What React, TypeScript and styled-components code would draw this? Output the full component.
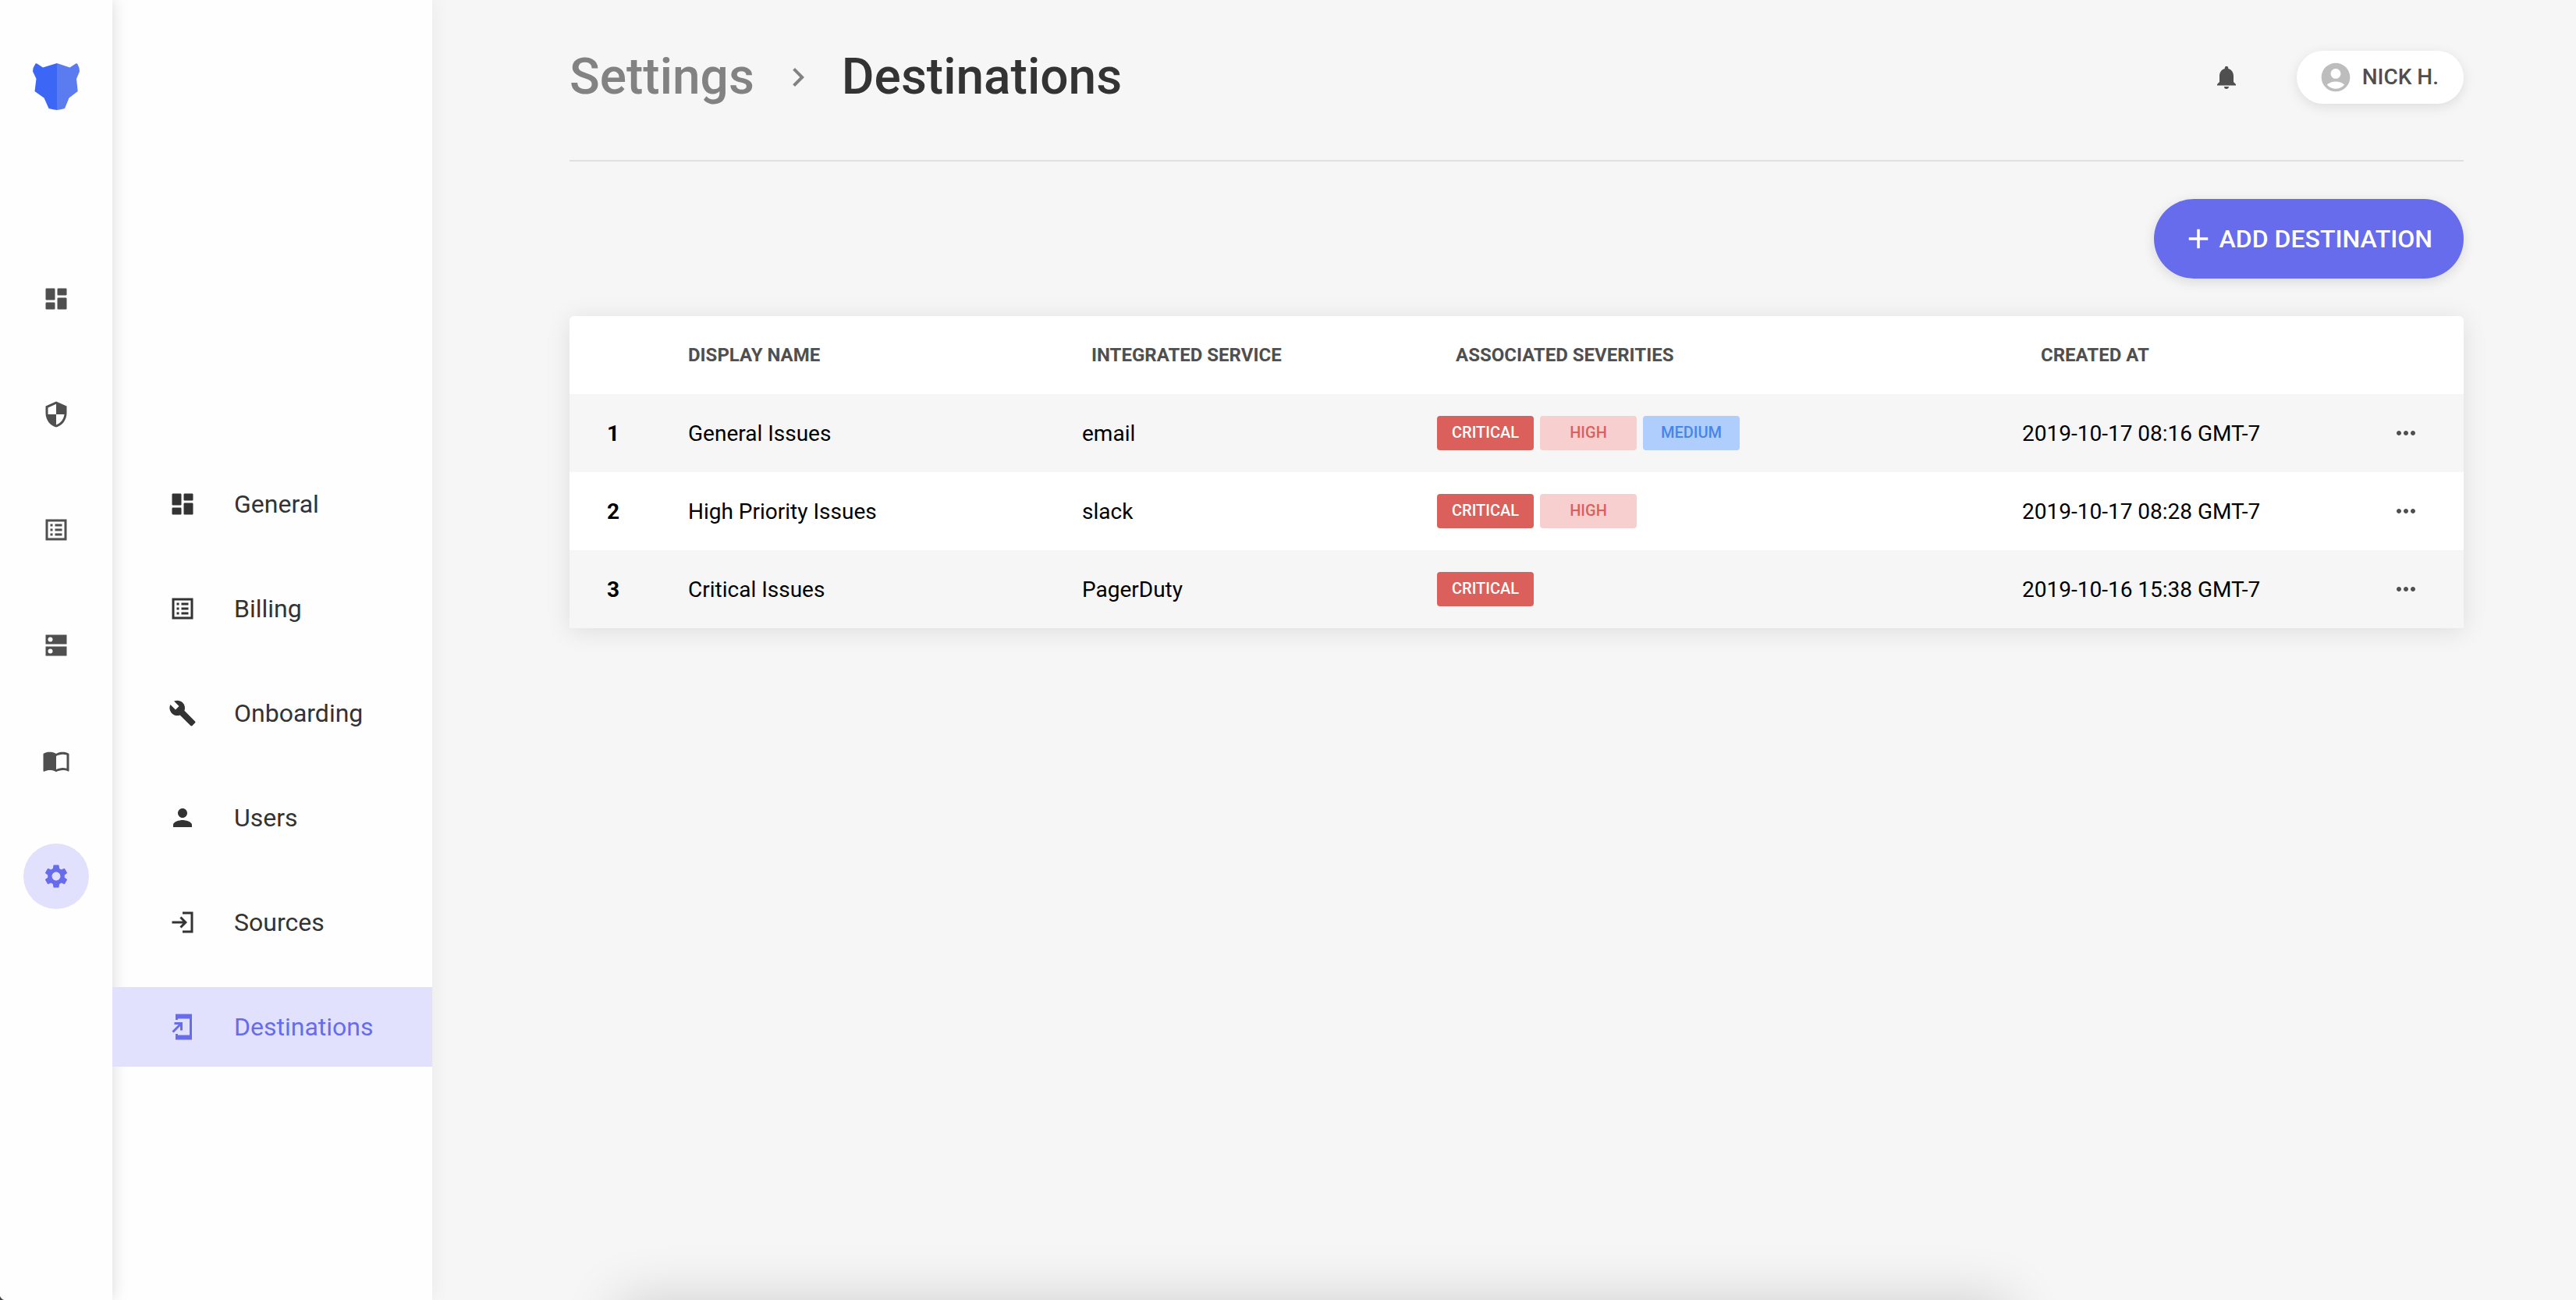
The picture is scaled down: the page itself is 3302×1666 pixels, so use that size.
import type { ReactNode } from "react";
import styled, { createGlobalStyle, css } from "styled-components";
import {
  MdAccountCircle,
  MdAdd,
  MdBuild,
  MdChevronRight,
  MdImportContacts,
  MdMoreHoriz,
  MdNotifications,
  MdPerson,
  MdSecurity,
  MdSettings,
} from "react-icons/md";

const color = {
  page: "#f6f6f6",
  surface: "#fefefe",
  ink: "#333333",
  muted: "#4f4f4f",
  faint: "#828282",
  accent: "#676cec",
  accentSoft: "#e1e1fd",
  line: "#e0e0e0",
};

const GlobalStyle = createGlobalStyle`
  *, *::before, *::after { box-sizing: border-box; }
  body {
    margin: 0;
    background: ${color.page};
    color: ${color.ink};
    font-family: Roboto, "Noto Sans", sans-serif;
  }
  a { color: inherit; text-decoration: none; }
  button { font: inherit; border: 0; cursor: pointer; }
  svg { display: block; flex: none; }
`;

/* ---------- layout ---------- */

const Shell = styled.div`
  display: flex;
  min-height: 100vh;
`;

const Rail = styled.nav`
  position: relative;
  z-index: 1;
  flex: none;
  display: flex;
  flex-direction: column;
  align-items: center;
  gap: 200px;
  width: 144px;
  padding-top: 81px;
  background: ${color.surface};
  box-shadow: 0 0 20px rgba(0, 0, 0, 0.15);
`;

const RailList = styled.ul`
  display: flex;
  flex-direction: column;
  gap: 64px;
  margin: 0;
  padding: 0;
  list-style: none;
`;

const RailLink = styled.a<{ $active?: boolean }>`
  display: flex;
  align-items: center;
  justify-content: center;
  width: 84px;
  height: 84px;
  border-radius: 50%;
  color: ${(p) => (p.$active ? color.accent : color.muted)};
  background: ${(p) => (p.$active ? color.accentSoft : "transparent")};
`;

const SubNav = styled.nav`
  flex: none;
  width: 410px;
  padding-top: 595px;
  background: ${color.surface};
  box-shadow: 0 0 24px rgba(0, 0, 0, 0.06);
`;

const SubNavList = styled.ul`
  display: flex;
  flex-direction: column;
  gap: 32px;
  margin: 0;
  padding: 0;
  list-style: none;
`;

const SubNavLink = styled.a<{ $active?: boolean }>`
  display: flex;
  align-items: center;
  gap: 48px;
  height: 102px;
  padding-left: 72px;
  font-size: 32px;
  line-height: 40px;
  ${(p) =>
    p.$active &&
    css`
      position: relative;
      z-index: 2;
      color: ${color.accent};
      background: ${color.accentSoft};
    `}
`;

const Main = styled.main`
  flex: 1;
  min-width: 0;
  display: flex;
  flex-direction: column;
  gap: 48px;
  padding: 0 144px 144px 176px;
`;

/* ---------- header ---------- */

const Header = styled.header`
  display: flex;
  align-items: center;
  justify-content: space-between;
  padding: 60px 0 67px;
  border-bottom: 2px solid ${color.line};
`;

const Breadcrumb = styled.div`
  display: flex;
  align-items: center;
  gap: 32px;
  font-size: 64px;
  font-weight: 500;
  line-height: 78px;
  color: ${color.faint};
`;

const Title = styled.h1`
  margin: 0;
  font: inherit;
  color: ${color.ink};
`;

const HeaderTools = styled.div`
  display: flex;
  align-items: center;
  gap: 72px;
`;

const IconButton = styled.button`
  display: flex;
  padding: 0;
  color: ${color.muted};
  background: none;
`;

const UserButton = styled.button`
  display: flex;
  align-items: center;
  gap: 12px;
  height: 68px;
  padding: 0 32px 0 28px;
  border-radius: 34px;
  background: #ffffff;
  color: ${color.muted};
  font-size: 28px;
  font-weight: 500;
  line-height: 36px;
  text-transform: uppercase;
  box-shadow: 0 4px 16px rgba(0, 0, 0, 0.1);

  svg {
    color: #bdbdbd;
  }
`;

const AddButton = styled.button`
  align-self: flex-end;
  display: flex;
  align-items: center;
  gap: 6px;
  height: 102px;
  padding: 0 40px 0 36px;
  border-radius: 51px;
  background: ${color.accent};
  color: #ffffff;
  font-size: 32px;
  font-weight: 500;
  line-height: 40px;
  text-transform: uppercase;
  box-shadow: 0 4px 16px rgba(0, 0, 0, 0.12);
`;

/* ---------- table ---------- */

const Table = styled.table`
  width: 100%;
  table-layout: fixed;
  border-spacing: 0;
  border-radius: 6px 6px 0 0;
  background: #ffffff;
  color: #000000;
  font-size: 28px;
  line-height: 36px;
  box-shadow: 0 4px 32px rgba(0, 0, 0, 0.1);
`;

const Col = styled.col<{ $width?: number }>`
  width: ${(p) => (p.$width ? `${p.$width}px` : "auto")};
`;

const Row = styled.tr`
  height: 100px;

  tbody &:nth-child(odd) {
    background: ${color.page};
  }
`;

const HeadCell = styled.th<{ $indent?: number }>`
  padding: 0 0 0 ${(p) => p.$indent ?? 0}px;
  color: ${color.muted};
  font-size: 24px;
  font-weight: 700;
  line-height: 32px;
  text-align: left;
  text-transform: uppercase;
`;

const IndexCell = styled.th`
  padding: 2px 0 0 48px;
  font-weight: 700;
  text-align: left;
`;

const Cell = styled.td`
  padding: 2px 0 0;
`;

const BadgeCell = styled.td`
  padding: 0;
`;

const ActionCell = styled.td`
  padding: 0 0 0 32px;
`;

const Badges = styled.div`
  display: flex;
  gap: 8px;
`;

type Severity = "critical" | "high" | "medium";

const severityTone: Record<Severity, { bg: string; fg: string }> = {
  critical: { bg: "#db605c", fg: "#ffffff" },
  high: { bg: "#f7cfce", fg: "#db605c" },
  medium: { bg: "#afcefd", fg: "#4685ea" },
};

const Badge = styled.span<{ $severity: Severity }>`
  width: 124px;
  height: 44px;
  border-radius: 4px;
  background: ${(p) => severityTone[p.$severity].bg};
  color: ${(p) => severityTone[p.$severity].fg};
  font-size: 20px;
  font-weight: 500;
  line-height: 42px;
  text-align: center;
  text-transform: uppercase;
`;

/* ---------- bottom edge ---------- */

const EdgeLayer = styled.div`
  position: fixed;
  inset: 0;
  z-index: 3;
  overflow: hidden;
  pointer-events: none;
`;

const DockShadow = styled.div`
  position: absolute;
  top: 100%;
  left: 24%;
  right: 22%;
  height: 120px;
  box-shadow: 0 0 72px rgba(0, 0, 0, 0.16);
`;

const WindowCorner = styled.div`
  position: absolute;
  left: 0;
  bottom: 0;
  width: 8px;
  height: 8px;
  background: radial-gradient(circle at 100% 0, transparent 8px, #444444 9px);
`;

/* ---------- icons ---------- */

const ICON = 36;

const Glyph = ({ children }: { children: ReactNode }) => (
  <svg width={ICON} height={ICON} viewBox="0 0 24 24" fill="currentColor" aria-hidden="true">
    {children}
  </svg>
);

const DashboardIcon = () => (
  <Glyph>
    <rect x="3" y="3" width="8" height="10" rx="0.8" />
    <rect x="3" y="15" width="8" height="6" rx="0.8" />
    <rect x="13" y="3" width="8" height="6" rx="0.8" />
    <rect x="13" y="11" width="8" height="10" rx="0.8" />
  </Glyph>
);

const ListIcon = () => (
  <Glyph>
    <path
      fillRule="evenodd"
      d="M3 3h18v18H3zM5 5v14h14V5zM11 7h6v2h-6zM11 11h6v2h-6zM11 15h6v2h-6zM7 7h2v2H7zM7 11h2v2H7zM7 15h2v2H7z"
    />
  </Glyph>
);

const ServerIcon = () => (
  <Glyph>
    <path
      fillRule="evenodd"
      d="M3 3h18v8H3zM7 5a2 2 0 1 0 0 4 2 2 0 0 0 0-4zM3 13h18v8H3zM7 15a2 2 0 1 0 0 4 2 2 0 0 0 0-4z"
    />
  </Glyph>
);

const SourceIcon = () => (
  <Glyph>
    <path d="M12 3h9v18h-9v-2h7V5h-7zM3 11h9.2L9.6 8.4 11 7l5 5-5 5-1.4-1.4 2.6-2.6H3z" />
  </Glyph>
);

const DestinationIcon = () => (
  <Glyph>
    <path d="M20 1H6v5h2V5h10v14H8v-1H6v5h14zM10 15h2V8H5v2h3.59L3 15.59 4.41 17 10 11.41z" />
  </Glyph>
);

const Logo = () => (
  <svg width="60" height="60" viewBox="0 0 60 60" aria-hidden="true">
    <path
      fill="#3b66f6"
      d="M31 0 13 5.5 5 .2Q4 0 3.4 .8Q0 5.500 0 10.500L4.500 20 2.500 36 14.500 44.500 20.500 58Q26 59.600 31 60z"
    />
    <path
      fill="#5b7cf0"
      d="M31 0 47.500 5.500 55.500 .2Q56.500 0 57.200 .8Q60 5.500 60 10.500L56 20 57.700 36 46.500 44.500 41 58Q36 59.600 31 60z"
    />
  </svg>
);

/* ---------- data ---------- */

const railItems = [
  { label: "Overview", icon: <DashboardIcon /> },
  { label: "Security", icon: <MdSecurity size={ICON} /> },
  { label: "Policies", icon: <ListIcon /> },
  { label: "Resources", icon: <ServerIcon /> },
  { label: "Documentation", icon: <MdImportContacts size={ICON} /> },
  { label: "Settings", icon: <MdSettings size={ICON} />, active: true },
];

const settingsItems = [
  { label: "General", icon: <DashboardIcon /> },
  { label: "Billing", icon: <ListIcon /> },
  { label: "Onboarding", icon: <MdBuild size={ICON} /> },
  { label: "Users", icon: <MdPerson size={ICON} /> },
  { label: "Sources", icon: <SourceIcon /> },
  { label: "Destinations", icon: <DestinationIcon />, active: true },
];

const destinations: { name: string; service: string; severities: Severity[]; created: string }[] = [
  {
    name: "General Issues",
    service: "email",
    severities: ["critical", "high", "medium"],
    created: "2019-10-17 08:16 GMT-7",
  },
  {
    name: "High Priority Issues",
    service: "slack",
    severities: ["critical", "high"],
    created: "2019-10-17 08:28 GMT-7",
  },
  {
    name: "Critical Issues",
    service: "PagerDuty",
    severities: ["critical"],
    created: "2019-10-16 15:38 GMT-7",
  },
];

export default function App() {
  return (
    <>
      <GlobalStyle />
      <Shell>
        <Rail aria-label="Main">
          <a href="#home" aria-label="Home">
            <Logo />
          </a>
          <RailList>
            {railItems.map((item) => (
              <li key={item.label}>
                <RailLink href="#" aria-label={item.label} $active={item.active}>
                  {item.icon}
                </RailLink>
              </li>
            ))}
          </RailList>
        </Rail>

        <SubNav aria-label="Settings">
          <SubNavList>
            {settingsItems.map((item) => (
              <li key={item.label}>
                <SubNavLink href="#" $active={item.active}>
                  {item.icon}
                  {item.label}
                </SubNavLink>
              </li>
            ))}
          </SubNavList>
        </SubNav>

        <Main>
          <Header>
            <Breadcrumb>
              <a href="#settings">Settings</a>
              <MdChevronRight size={48} />
              <Title>Destinations</Title>
            </Breadcrumb>
            <HeaderTools>
              <IconButton type="button" aria-label="Notifications">
                <MdNotifications size={ICON} />
              </IconButton>
              <UserButton type="button">
                <MdAccountCircle size={44} />
                Nick H.
              </UserButton>
            </HeaderTools>
          </Header>

          <AddButton type="button">
            <MdAdd size={42} />
            Add Destination
          </AddButton>

          <Table>
            <colgroup>
              <Col $width={152} />
              <Col $width={505} />
              <Col $width={455} />
              <Col />
              <Col $width={442} />
              <Col $width={124} />
            </colgroup>
            <thead>
              <Row>
                <td />
                <HeadCell scope="col">Display Name</HeadCell>
                <HeadCell scope="col" $indent={12}>
                  Integrated Service
                </HeadCell>
                <HeadCell scope="col" $indent={24}>
                  Associated Severities
                </HeadCell>
                <HeadCell scope="col" $indent={24}>
                  Created At
                </HeadCell>
                <td />
              </Row>
            </thead>
            <tbody>
              {destinations.map((d, i) => (
                <Row key={d.name}>
                  <IndexCell scope="row">{i + 1}</IndexCell>
                  <Cell>{d.name}</Cell>
                  <Cell>{d.service}</Cell>
                  <BadgeCell>
                    <Badges>
                      {d.severities.map((s) => (
                        <Badge key={s} $severity={s}>
                          {s}
                        </Badge>
                      ))}
                    </Badges>
                  </BadgeCell>
                  <Cell>{d.created}</Cell>
                  <ActionCell>
                    <IconButton type="button" aria-label={`Actions for ${d.name}`}>
                      <MdMoreHoriz size={ICON} />
                    </IconButton>
                  </ActionCell>
                </Row>
              ))}
            </tbody>
          </Table>
        </Main>
      </Shell>
      <EdgeLayer aria-hidden="true">
        <DockShadow />
        <WindowCorner />
      </EdgeLayer>
    </>
  );
}
